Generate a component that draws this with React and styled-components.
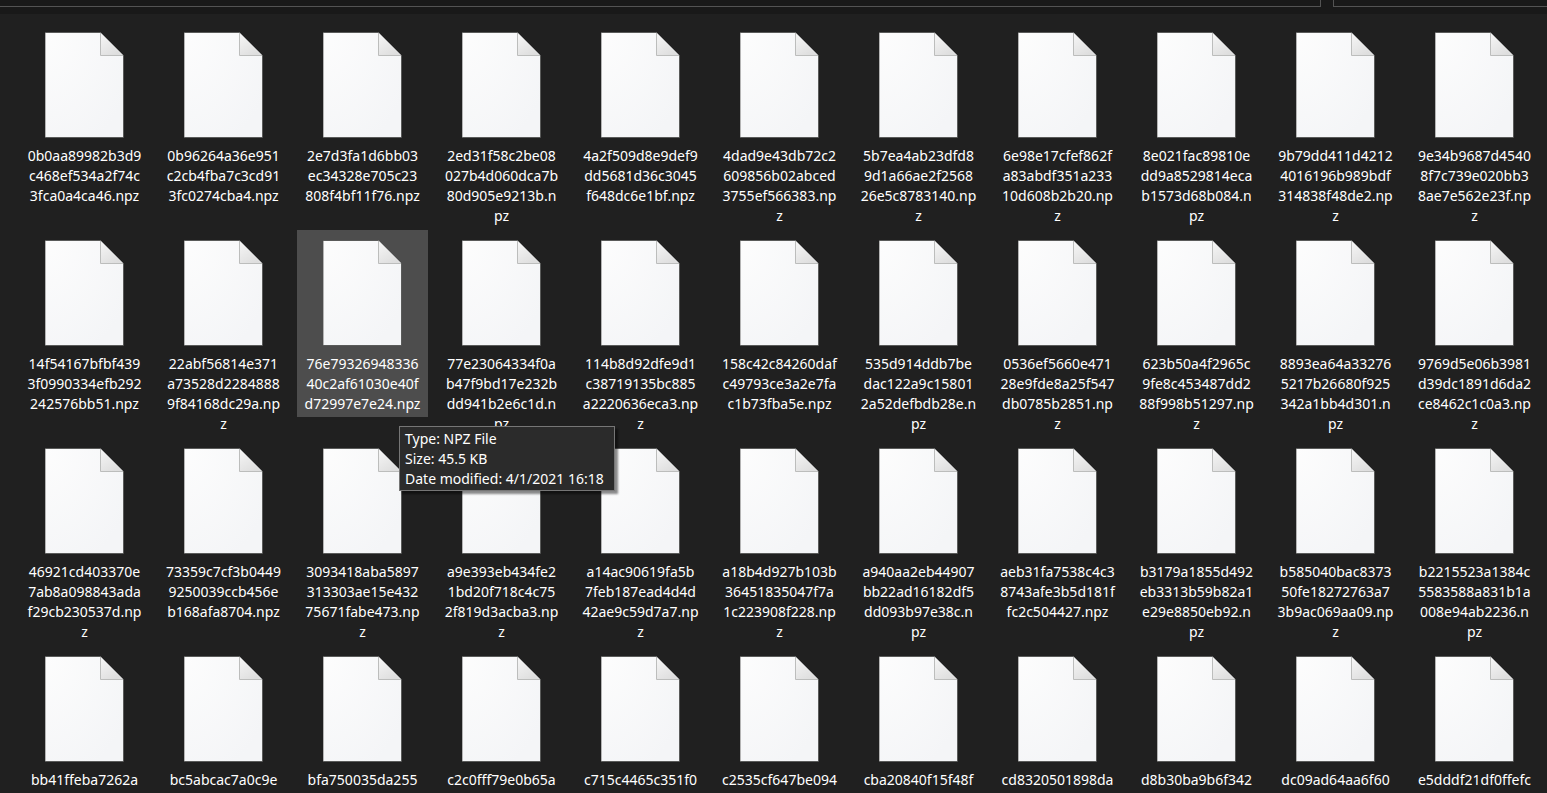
import React from "react";
import styled, { createGlobalStyle } from "styled-components";

const GlobalStyle = createGlobalStyle`
  * { box-sizing: border-box; }
  body {
    margin: 0;
    background: #202020;
    color: #ffffff;
    font-family: "Noto Sans", "Open Sans", sans-serif;
    font-size: 14px;
    line-height: 20px;
  }
`;

const Window = styled.div`
  height: 100vh;
  display: flex;
  flex-direction: column;
  overflow: hidden;
`;

const Toolbar = styled.header`
  flex: none;
  display: flex;
  gap: 12px;
  height: 14px;
  background: #191919;
`;

const Field = styled.div`
  height: 7px;
  flex: ${(p) => (p.$grow ? "1" : "0 0 214px")};
  border: 1px solid #535353;
  border-top: 0;
  ${(p) => (p.$grow ? "border-left: 0;" : "border-right: 0;")}
`;

const FileGrid = styled.ul`
  flex: 1;
  min-height: 0;
  margin: 0;
  padding: 8px 0 0 19px;
  list-style: none;
  display: grid;
  grid-template-columns: repeat(auto-fill, 131px);
  grid-auto-rows: 208px;
  column-gap: 8px;
  align-items: start;
`;

const FileItem = styled.li`
  position: relative;
  display: flex;
  flex-direction: column;
  align-items: center;
  gap: 8px;
  padding: 10px 0 3px;
  background: ${(p) => (p.$hovered ? "#4d4d4d" : "transparent")};
`;

const FileName = styled.span`
  text-align: center;
`;

const NameLine = styled.span`
  display: block;
  white-space: nowrap;
`;

const Tooltip = styled.div`
  position: absolute;
  z-index: 1;
  top: 196px;
  left: 102px;
  padding: 2px 10px 1px 5px;
  border: 1px solid #767676;
  background: #2b2b2b;
  box-shadow: 3px 3px 2px rgba(0, 0, 0, 0.45);
  white-space: nowrap;
`;

const TooltipLine = styled.div``;

const Definitions = styled.svg`
  position: absolute;
  width: 0;
  height: 0;
`;

const files = [
  "0b0aa89982b3d9 c468ef534a2f74c 3fca0a4ca46.npz",
  "0b96264a36e951 c2cb4fba7c3cd91 3fc0274cba4.npz",
  "2e7d3fa1d6bb03 ec34328e705c23 808f4bf11f76.npz",
  "2ed31f58c2be08 027b4d060dca7b 80d905e9213b.n pz",
  "4a2f509d8e9def9 dd5681d36c3045 f648dc6e1bf.npz",
  "4dad9e43db72c2 609856b02abced 3755ef566383.np z",
  "5b7ea4ab23dfd8 9d1a66ae2f2568 26e5c8783140.np z",
  "6e98e17cfef862f a83abdf351a233 10d608b2b20.np z",
  "8e021fac89810e dd9a8529814eca b1573d68b084.n pz",
  "9b79dd411d4212 4016196b989bdf 314838f48de2.np z",
  "9e34b9687d4540 8f7c739e020bb3 8ae7e562e23f.np z",
  "14f54167bfbf439 3f0990334efb292 242576bb51.npz",
  "22abf56814e371 a73528d2284888 9f84168dc29a.np z",
  "76e79326948336 40c2af61030e40f d72997e7e24.npz",
  "77e23064334f0a b47f9bd17e232b dd941b2e6c1d.n pz",
  "114b8d92dfe9d1 c38719135bc885 a2220636eca3.np z",
  "158c42c84260daf c49793ce3a2e7fa c1b73fba5e.npz",
  "535d914ddb7be dac122a9c15801 2a52defbdb28e.n pz",
  "0536ef5660e471 28e9fde8a25f547 db0785b2851.np z",
  "623b50a4f2965c 9fe8c453487dd2 88f998b51297.np z",
  "8893ea64a33276 5217b26680f925 342a1bb4d301.n pz",
  "9769d5e06b3981 d39dc1891d6da2 ce8462c1c0a3.np z",
  "46921cd403370e 7ab8a098843ada f29cb230537d.np z",
  "73359c7cf3b0449 9250039ccb456e b168afa8704.npz",
  "3093418aba5897 313303ae15e432 75671fabe473.np z",
  "a9e393eb434fe2 1bd20f718c4c75 2f819d3acba3.np z",
  "a14ac90619fa5b 7feb187ead4d4d 42ae9c59d7a7.np z",
  "a18b4d927b103b 36451835047f7a 1c223908f228.np z",
  "a940aa2eb44907 bb22ad16182df5 dd093b97e38c.n pz",
  "aeb31fa7538c4c3 8743afe3b5d181f fc2c504427.npz",
  "b3179a1855d492 eb3313b59b82a1 e29e8850eb92.n pz",
  "b585040bac8373 50fe18272763a7 3b9ac069aa09.np z",
  "b2215523a1384c 5583588a831b1a 008e94ab2236.n pz",
  "bb41ffeba7262a",
  "bc5abcac7a0c9e",
  "bfa750035da255",
  "c2c0fff79e0b65a",
  "c715c4465c351f0",
  "c2535cf647be094",
  "cba20840f15f48f",
  "cd8320501898da",
  "d8b30ba9b6f342",
  "dc09ad64aa6f60",
  "e5dddf21df0ffefc",
].map((name) => name.split(" "));

const hoveredIndex = 13;

function PageIcon() {
  return (
    <svg width="79" height="106" viewBox="0 0 79 106" aria-hidden="true">
      <path d="M0 .5H55.5L78 23V105.5H0Z" fill="url(#paper)" />
      <path d="M.5 105V1" stroke="#b4b4b4" fill="none" />
      <path d="M0 .5H55.5M78.5 23V105.5H0" stroke="#5a5b5a" fill="none" />
      <path d="M55.5 1V23.5H78Z" fill="url(#fold)" />
      <path d="M55.5 1V23.5H78" stroke="#bcbdbc" fill="none" />
    </svg>
  );
}

function IconGradients() {
  return (
    <Definitions aria-hidden="true">
      <defs>
        <radialGradient id="paper" cx="0" cy="0" r="1.2">
          <stop offset="0" stopColor="#fdfdfd" />
          <stop offset="1" stopColor="#f4f5f7" />
        </radialGradient>
        <linearGradient id="fold" x1="0" y1="0" x2=".6" y2="1">
          <stop offset="0" stopColor="#f7f7f7" />
          <stop offset="1" stopColor="#dedede" />
        </linearGradient>
      </defs>
    </Definitions>
  );
}

export default function App() {
  return (
    <Window>
      <GlobalStyle />
      <IconGradients />
      <Toolbar>
        <Field $grow />
        <Field />
      </Toolbar>
      <FileGrid>
        {files.map((lines, i) => (
          <FileItem key={lines[0]} $hovered={i === hoveredIndex}>
            <PageIcon />
            <FileName>
              {lines.map((line) => (
                <NameLine key={line}>{line}</NameLine>
              ))}
            </FileName>
            {i === hoveredIndex && (
              <Tooltip role="tooltip">
                <TooltipLine>Type: NPZ File</TooltipLine>
                <TooltipLine>Size: 45.5 KB</TooltipLine>
                <TooltipLine>Date modified: 4/1/2021 16:18</TooltipLine>
              </Tooltip>
            )}
          </FileItem>
        ))}
      </FileGrid>
    </Window>
  );
}
